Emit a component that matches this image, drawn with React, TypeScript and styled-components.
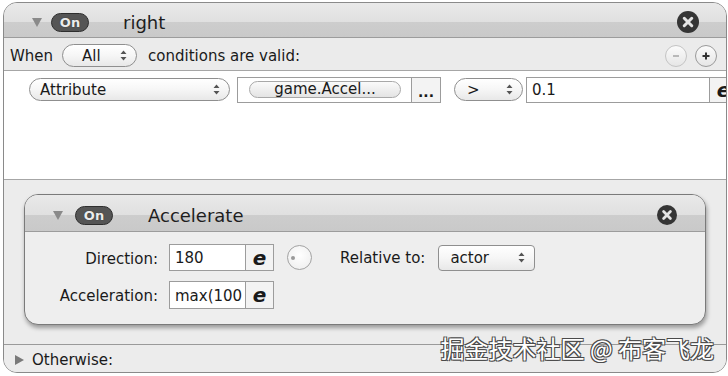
import React from "react";
import styled, { createGlobalStyle } from "styled-components";

const GlobalStyle = createGlobalStyle`
  html, body {
    margin: 0;
    padding: 0;
    background: #ffffff;
  }
  body {
    font-family: "DejaVu Sans", "Noto Sans CJK SC", sans-serif;
    color: #1a1a1a;
  }
  #root {
    width: 728px;
    height: 376px;
    overflow: hidden;
  }
`;

const Page = styled.div`
  padding: 2px 0 0 3px;
`;

const Panel = styled.div`
  position: relative;
  box-sizing: border-box;
  width: 724px;
  height: 371px;
  border: 1px solid #8a8a8a;
  border-radius: 14px;
  overflow: hidden;
  display: flex;
  flex-direction: column;
  background: #ececec;
`;

const Header = styled.div<{ $inner?: boolean }>`
  display: flex;
  align-items: center;
  flex-shrink: 0;
  box-sizing: border-box;
  height: ${({ $inner }) => ($inner ? 37 : 35)}px;
  padding: 4px ${({ $inner }) => ($inner ? 28 : 27)}px 0 28px;
  background: linear-gradient(
    #e9e9e9 0%,
    #e0e0e0 55%,
    #cdcdcd 56%,
    #c9c9c9 100%
  );
  border-bottom: 1px solid #9c9c9c;
`;

const Disclosure = styled.span<{ $open?: boolean }>`
  display: inline-block;
  width: 0;
  height: 0;
  ${({ $open }) =>
    $open
      ? `border-left: 5.5px solid transparent;
         border-right: 5.5px solid transparent;
         border-top: 9px solid #8a8a8a;`
      : `border-top: 5.5px solid transparent;
         border-bottom: 5.5px solid transparent;
         border-left: 9px solid #7a7a7a;`}
`;

const OnBadge = styled.span<{ $gap: number }>`
  margin-left: ${({ $gap }) => $gap}px;
  width: 38px;
  height: 19px;
  box-sizing: border-box;
  border-radius: 10px;
  border: 1px solid #2e2e2e;
  background: #555555;
  color: #ececec;
  font-size: 13px;
  font-weight: bold;
  line-height: 17px;
  text-align: center;
  text-shadow: 0 0 1px #222;
`;

const Title = styled.span<{ $gap: number }>`
  margin-left: ${({ $gap }) => $gap}px;
  font-size: 18px;
  color: #1e1e1e;
`;

const CloseWrap = styled.span`
  margin-left: auto;
  display: flex;
`;

const CloseIcon = ({ size }: { size: number }) => (
  <CloseWrap>
    <svg width={size} height={size} viewBox="0 0 20 20">
      <circle cx="10" cy="10" r="10" fill="#353535" />
      <path
        d="M6.6 6.6 L13.4 13.4 M13.4 6.6 L6.6 13.4"
        stroke="#e4e4e4"
        strokeWidth="2.8"
        strokeLinecap="round"
      />
    </svg>
  </CloseWrap>
);

const WhenRow = styled.div`
  display: flex;
  align-items: center;
  flex-shrink: 0;
  box-sizing: border-box;
  height: 33px;
  padding: 3px 9px 0 6px;
  border-bottom: 1px solid #a6a6a6;
  background: #ebebeb;
  font-size: 15px;
`;

const Words = styled.span<{ $gap?: number }>`
  margin-left: ${({ $gap }) => $gap ?? 0}px;
  font-size: 15px;
  color: #1a1a1a;
  white-space: nowrap;
`;

const RoundButton = styled.span<{ $disabled?: boolean; $gap?: string }>`
  margin-left: ${({ $gap }) => $gap ?? "0"};
  width: 22px;
  height: 22px;
  box-sizing: border-box;
  border-radius: 50%;
  border: 1px solid ${({ $disabled }) => ($disabled ? "#c4c4c4" : "#9a9a9a")};
  background: linear-gradient(#fbfbfb, #e6e6e6);
  display: flex;
  align-items: center;
  justify-content: center;
`;

const PopupBox = styled.span<{
  $w: number;
  $pad: number;
  $gap?: number;
  $square?: boolean;
}>`
  flex-shrink: 0;
  display: flex;
  align-items: center;
  justify-content: space-between;
  box-sizing: border-box;
  width: ${({ $w }) => $w}px;
  height: ${({ $square }) => ($square ? 26 : 23)}px;
  margin-left: ${({ $gap }) => $gap ?? 0}px;
  padding: 0 9px 0 ${({ $pad }) => $pad}px;
  border: 1px solid #8f8f8f;
  border-radius: ${({ $square }) => ($square ? 4 : 12)}px;
  background: linear-gradient(#ffffff 0%, #f6f6f6 50%, #e8e8e8 100%);
  font-size: 15px;
  color: #1a1a1a;
`;

const Arrows = () => (
  <svg width="7" height="11" viewBox="0 0 7 11">
    <path d="M3.5 0.5 L6.5 4 L0.5 4 Z M0.5 7 L6.5 7 L3.5 10.5 Z" fill="#555" />
  </svg>
);

const Popup = ({
  label,
  width,
  pad,
  gap,
  square,
}: {
  label: string;
  width: number;
  pad: number;
  gap?: number;
  square?: boolean;
}) => (
  <PopupBox $w={width} $pad={pad} $gap={gap} $square={square}>
    <span>{label}</span>
    <Arrows />
  </PopupBox>
);

const ConditionArea = styled.div`
  flex-shrink: 0;
  height: 108px;
  background: #ffffff;
  border-bottom: 1px solid #a6a6a6;
`;

const ConditionRow = styled.div`
  display: flex;
  align-items: center;
  height: 27px;
  margin-top: 5px;
  padding-left: 25px;
  white-space: nowrap;
`;

const FieldBox = styled.span<{ $w: number; $h?: number; $gap?: number }>`
  flex-shrink: 0;
  display: flex;
  box-sizing: border-box;
  width: ${({ $w }) => $w}px;
  height: ${({ $h }) => $h ?? 27}px;
  margin-left: ${({ $gap }) => $gap ?? 0}px;
  border: 1px solid #9c9c9c;
  background: #ffffff;
`;

const FieldText = styled.span`
  flex: 1;
  min-width: 0;
  display: flex;
  align-items: center;
  padding: 1px 0 0 5px;
  font-size: 15px;
  color: #1a1a1a;
  overflow: hidden;
  white-space: nowrap;
`;

const PillSlot = styled.span`
  flex: 1;
  display: flex;
  align-items: center;
  padding: 0 10px 0 11px;
`;

const Pill = styled.span`
  flex: 1;
  height: 17px;
  box-sizing: border-box;
  border: 1px solid #a8a8a8;
  border-radius: 9px;
  background: linear-gradient(#fafafa, #e4e4e4);
  font-size: 15px;
  line-height: 15px;
  text-align: center;
  color: #1a1a1a;
`;

const SideButton = styled.span<{ $w?: number }>`
  flex-shrink: 0;
  width: ${({ $w }) => $w ?? 27}px;
  border-left: 1px solid #9c9c9c;
  background: #f3f3f3;
  display: flex;
  align-items: center;
  justify-content: center;
  color: #1a1a1a;
`;

const Dots = styled.span`
  font-size: 14px;
  font-weight: bold;
  padding-top: 5px;
`;

const ExprE = styled.span`
  font-family: "DejaVu Sans", sans-serif;
  font-style: italic;
  font-weight: bold;
  font-size: 20px;
  line-height: 20px;
  color: #1a1a1a;
`;

const GrayArea = styled.div`
  flex: 1;
  padding: 14px 0 0 20px;
  background: #ececec;
`;

const InnerPanel = styled.div`
  box-sizing: border-box;
  width: 682px;
  height: 131px;
  border: 1px solid #7a7a7a;
  border-radius: 14px;
  overflow: hidden;
  background: #eeeeee;
  box-shadow: 1px 3px 4px rgba(0, 0, 0, 0.35);
`;

const InnerBody = styled.div`
  display: grid;
  grid-template-columns: 133px auto;
  column-gap: 11px;
  row-gap: 10px;
  align-items: center;
  padding-top: 12px;
`;

const Label = styled.span`
  padding-top: 2px;
  text-align: right;
  font-size: 15px;
  color: #1a1a1a;
`;

const Controls = styled.div`
  display: flex;
  align-items: center;
`;

const Knob = styled.span`
  margin-left: 13px;
  width: 25px;
  height: 25px;
  box-sizing: border-box;
  border-radius: 50%;
  border: 1px solid #a2a2a2;
  background: radial-gradient(circle at 50% 40%, #ffffff, #ececec);
  display: flex;
  align-items: center;
  padding-left: 3px;

  &::after {
    content: "";
    width: 4px;
    height: 4px;
    border-radius: 50%;
    background: #9a9a9a;
  }
`;

const OtherwiseRow = styled.div`
  display: flex;
  align-items: center;
  flex-shrink: 0;
  box-sizing: border-box;
  height: 28px;
  padding: 2px 0 0 11px;
  border-top: 1px solid #9a9a9a;
  background: #ececec;
`;

const Watermark = styled.div`
  position: absolute;
  right: 12px;
  bottom: 12px;
  font-family: "Noto Sans CJK SC", sans-serif;
  font-size: 24px;
  line-height: 1;
  color: #ffffff;
  white-space: nowrap;
  text-shadow: 1px 1px 0 #4a4a4a, -1px -1px 0 #4a4a4a, 1px -1px 0 #4a4a4a,
    -1px 1px 0 #4a4a4a;
`;

const ExprField = ({
  value,
  width,
  height,
  gap,
}: {
  value: string;
  width: number;
  height: number;
  gap?: number;
}) => (
  <FieldBox $w={width} $h={height} $gap={gap}>
    <FieldText>{value}</FieldText>
    <SideButton>
      <ExprE>e</ExprE>
    </SideButton>
  </FieldBox>
);

export default function App() {
  return (
    <Page>
      <GlobalStyle />
      <Panel>
        <Header>
          <Disclosure $open />
          <OnBadge $gap={9}>On</OnBadge>
          <Title $gap={34}>right</Title>
          <CloseIcon size={22} />
        </Header>

        <WhenRow>
          <Words>When</Words>
          <Popup label="All" width={75} pad={19} gap={9} />
          <Words $gap={11}>conditions are valid:</Words>
          <RoundButton $disabled $gap="auto">
            <svg width="10" height="10" viewBox="0 0 10 10">
              <path d="M2 5 H8" stroke="#b8b8b8" strokeWidth="2" />
            </svg>
          </RoundButton>
          <RoundButton $gap="8px">
            <svg width="10" height="10" viewBox="0 0 10 10">
              <path d="M1.5 5 H8.5 M5 1.5 V8.5" stroke="#333" strokeWidth="2" />
            </svg>
          </RoundButton>
        </WhenRow>

        <ConditionArea>
          <ConditionRow>
            <Popup label="Attribute" width={201} pad={10} />
            <FieldBox $w={204} $h={26} $gap={7}>
              <PillSlot>
                <Pill>game.Accel...</Pill>
              </PillSlot>
              <SideButton $w={28}>
                <Dots>...</Dots>
              </SideButton>
            </FieldBox>
            <Popup label=">" width={69} pad={12} gap={13} />
            <ExprField value="0.1" width={212} height={26} gap={3} />
          </ConditionRow>
        </ConditionArea>

        <GrayArea>
          <InnerPanel>
            <Header $inner>
              <Disclosure $open />
              <OnBadge $gap={12}>On</OnBadge>
              <Title $gap={35}>Accelerate</Title>
              <CloseIcon size={20} />
            </Header>
            <InnerBody>
              <Label>Direction:</Label>
              <Controls>
                <ExprField value="180" width={105} height={27} />
                <Knob />
                <Words $gap={28}>Relative to:</Words>
                <Popup label="actor" width={97} pad={11} gap={13} square />
              </Controls>
              <Label>Acceleration:</Label>
              <Controls>
                <ExprField value="max(100" width={105} height={28} />
              </Controls>
            </InnerBody>
          </InnerPanel>
        </GrayArea>

        <OtherwiseRow>
          <Disclosure />
          <Words $gap={8}>Otherwise:</Words>
        </OtherwiseRow>

        <Watermark>掘金技术社区 @ 布客飞龙</Watermark>
      </Panel>
    </Page>
  );
}
